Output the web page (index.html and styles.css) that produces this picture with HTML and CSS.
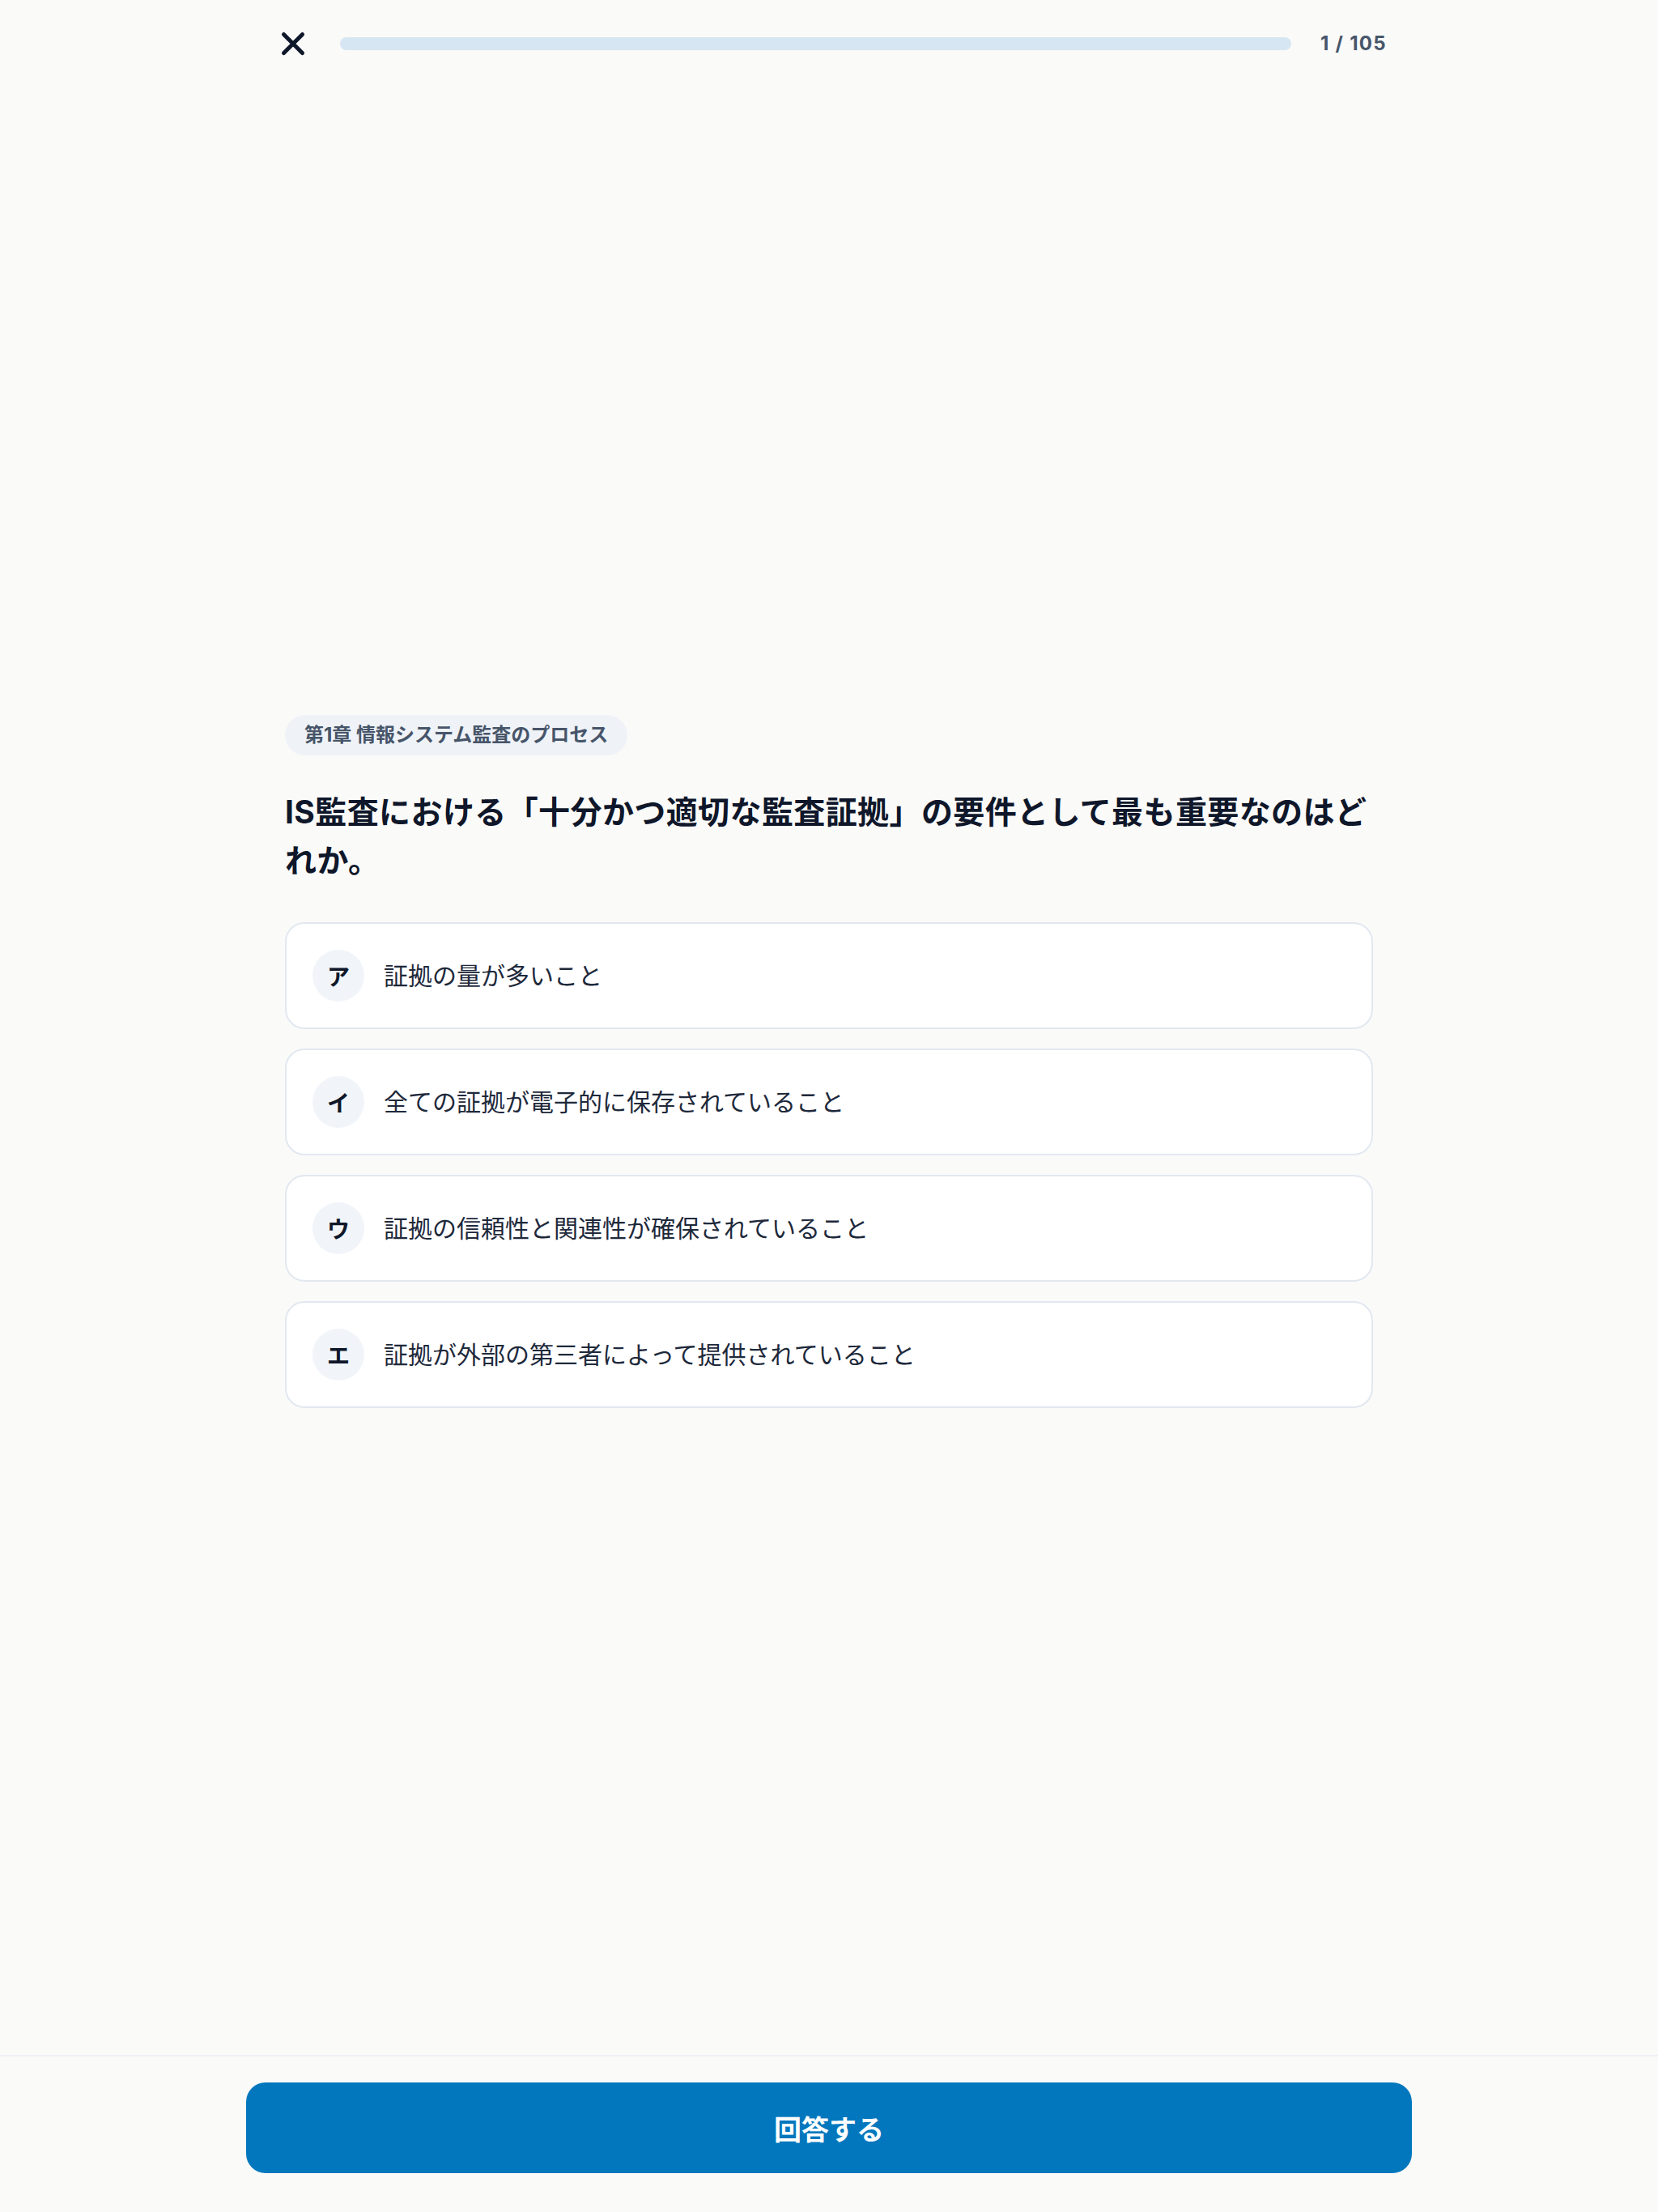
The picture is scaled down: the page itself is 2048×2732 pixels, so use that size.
FILE: index.html
```html
<!DOCTYPE html>
<html lang="ja">
<head>
<meta charset="utf-8">
<title>Quiz</title>
<link rel="stylesheet" href="styles.css">
</head>
<body>
<div class="app">
  <header class="header">
    <button class="close-btn" aria-label="閉じる">
      <svg width="40" height="40" viewBox="0 0 40 40"><path d="M8.5 8.5 L31.5 31.5 M31.5 8.5 L8.5 31.5" stroke="#0f172a" stroke-width="5" stroke-linecap="round" fill="none"/></svg>
    </button>
    <div class="progress"><div class="progress-fill"></div></div>
    <span class="counter">1 / 105</span>
  </header>
  <main class="main">
    <div class="content">
      <span class="tag">第1章 情報システム監査のプロセス</span>
      <h1 class="question">IS監査における「十分かつ適切な監査証拠」の要件として最も重要なのはどれか。</h1>
      <div class="options">
        <div class="option"><span class="badge">ア</span><span class="option-text">証拠の量が多いこと</span></div>
        <div class="option"><span class="badge">イ</span><span class="option-text">全ての証拠が電子的に保存されていること</span></div>
        <div class="option"><span class="badge">ウ</span><span class="option-text">証拠の信頼性と関連性が確保されていること</span></div>
        <div class="option"><span class="badge">エ</span><span class="option-text">証拠が外部の第三者によって提供されていること</span></div>
      </div>
    </div>
  </main>
  <footer class="footer">
    <button class="submit">回答する</button>
  </footer>
</div>
</body>
</html>
```
FILE: styles.css
```css
* { box-sizing: border-box; }
html, body { margin: 0; padding: 0; }
body {
  background: #fafaf9;
  font-family: Inter, "Noto Sans CJK JP", sans-serif;
  color: #0f172a;
}
.app {
  height: 2732px;
  display: flex;
  flex-direction: column;
}
.header {
  width: 1376px;
  margin: 0 auto;
  height: 84px;
  padding-top: 24px;
  display: flex;
  align-items: flex-start;
  gap: 36px;
  flex: none;
}
.close-btn {
  width: 48px;
  height: 60px;
  border: none;
  background: none;
  padding: 0 0 0 4px;
  display: flex;
  align-items: center;
  justify-content: center;
  flex: none;
}
.progress {
  flex: 1;
  height: 16px;
  margin-top: 22px;
  border-radius: 8px;
  background: #d6e6f2;
  overflow: hidden;
}
.progress-fill { width: 0; height: 100%; background: #0277bd; }
.counter {
  height: 60px;
  line-height: 60px;
  font-size: 24px;
  font-weight: 700;
  letter-spacing: 1.3px;
  margin-right: -1px;
  color: #475569;
  flex: none;
}
.main {
  flex: 1;
  display: flex;
  flex-direction: column;
  justify-content: center;
}
.content {
  width: 1344px;
  margin: 0 auto;
  display: flex;
  flex-direction: column;
  align-items: flex-start;
}
.tag {
  display: inline-block;
  background: #eff3f8;
  color: #475569;
  font-size: 24px;
  font-weight: 700;
  line-height: 34px;
  padding: 8px 24px;
  border-radius: 25px;
}
.question {
  margin: 40px 0 0;
  font-size: 39px;
  letter-spacing: 0.4px;
  line-height: 60px;
  font-weight: 700;
  color: #0f172a;
}
.options {
  margin-top: 46px;
  width: 100%;
  display: flex;
  flex-direction: column;
  gap: 24px;
}
.option {
  background: #ffffff;
  border: 2px solid #e2e8f0;
  border-radius: 24px;
  padding: 32px;
  display: flex;
  align-items: center;
  gap: 24px;
}
.badge {
  width: 64px;
  height: 64px;
  border-radius: 50%;
  background: #f1f5f9;
  display: flex;
  align-items: center;
  justify-content: center;
  font-size: 28px;
  font-weight: 700;
  color: #0f172a;
  flex: none;
}
.option-text {
  font-size: 30px;
  line-height: 44px;
  color: #1e293b;
}
.footer {
  border-top: 2px solid #eef1f4;
  padding: 32px 0 48px;
  display: flex;
  justify-content: center;
  flex: none;
}
.submit {
  width: 1440px;
  height: 112px;
  border: none;
  border-radius: 24px;
  background: #0277bd;
  color: #ffffff;
  font-family: Inter, "Noto Sans CJK JP", sans-serif;
  font-size: 34px;
  font-weight: 700;
}
```
